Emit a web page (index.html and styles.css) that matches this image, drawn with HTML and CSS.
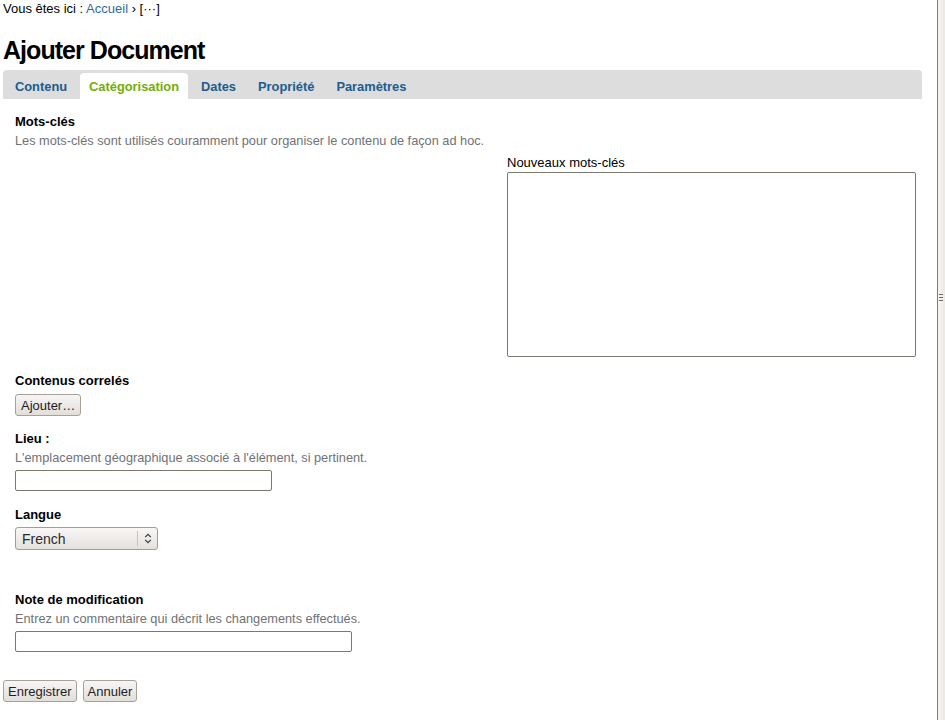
FILE: index.html
```html
<!DOCTYPE html>
<html lang="fr">
<head>
<meta charset="utf-8">
<title>Ajouter Document</title>
<link rel="stylesheet" href="styles.css">
</head>
<body>
<div class="layout">
  <main class="main">
    <nav class="breadcrumbs">Vous êtes ici : <a class="crumb-link" href="#">Accueil</a> › [···]</nav>
    <h1 class="title">Ajouter Document</h1>
    <ul class="tabs">
      <li class="tab">Contenu</li>
      <li class="tab tab-active">Catégorisation</li>
      <li class="tab">Dates</li>
      <li class="tab">Propriété</li>
      <li class="tab">Paramètres</li>
    </ul>
    <div class="panel">
      <div class="field">
        <div class="label">Mots-clés</div>
        <div class="desc">Les mots-clés sont utilisés couramment pour organiser le contenu de façon ad hoc.</div>
        <div class="keywords">
          <div class="kw-existing"></div>
          <div class="kw-new">
            <div class="kw-label">Nouveaux mots-clés</div>
            <textarea class="textarea"></textarea>
          </div>
        </div>
      </div>
      <div class="field field-related">
        <div class="label">Contenus correlés</div>
        <button class="btn btn-ctrl" type="button">Ajouter…</button>
      </div>
      <div class="field">
        <div class="label">Lieu :</div>
        <div class="desc">L'emplacement géographique associé à l'élément, si pertinent.</div>
        <input class="input input-short" type="text">
      </div>
      <div class="field field-lang">
        <div class="label">Langue</div>
        <div class="select">
          <span class="select-text">French</span>
          <span class="select-arrow">
            <svg width="8" height="11" viewBox="0 0 8 11"><path d="M1.2 4.2 L4 1.4 L6.8 4.2 M1.2 6.8 L4 9.6 L6.8 6.8" fill="none" stroke="#3a3a3a" stroke-width="1.2"/></svg>
          </span>
        </div>
      </div>
      <div class="field">
        <div class="label">Note de modification</div>
        <div class="desc">Entrez un commentaire qui décrit les changements effectués.</div>
        <input class="input input-long" type="text">
      </div>
    </div>
    <div class="actions">
      <button class="btn" type="button">Enregistrer</button>
      <button class="btn" type="button">Annuler</button>
    </div>
  </main>
  <div class="splitter"><span class="grip"></span></div>
</div>
</body>
</html>
```

FILE: styles.css
```css
html, body {
  margin: 0;
  padding: 0;
  background: #fff;
}
body {
  font-family: "Liberation Sans", Arial, sans-serif;
  font-size: 13px;
  color: #000;
}
.layout {
  display: flex;
  min-height: 720px;
}
.main {
  flex: 1;
  padding: 0 15px 0 3px;
}
.breadcrumbs {
  line-height: 18px;
}
.crumb-link {
  color: #36699b;
  text-decoration: none;
}
.title {
  margin: 17px 0 5px;
  font-size: 25px;
  line-height: 30px;
  letter-spacing: -0.95px;
  font-weight: bold;
}
.tabs {
  list-style: none;
  margin: 0;
  padding: 3px 0 0 3px;
  display: flex;
  gap: 4px;
  height: 29px;
  box-sizing: border-box;
  background: #dddddd;
  border-radius: 4px 4px 0 0;
}
.tab {
  padding: 4px 9px 3px;
  line-height: 19px;
  font-size: 12.85px;
  font-weight: bold;
  color: #205c90;
  border-radius: 4px 4px 0 0;
}
.tab-active {
  background: #fff;
  color: #75ad0a;
}
.panel {
  padding: 13px 6px 0 12px;
}
.field {
  margin-bottom: 14px;
}
.field-related {
  margin-bottom: 13px;
}
.field-lang {
  margin-bottom: 40px;
}
.label {
  font-weight: bold;
  line-height: 19px;
}
.desc {
  line-height: 19px;
  font-size: 12.75px;
  color: #707275;
}
.keywords {
  display: grid;
  grid-template-columns: 492px 409px;
  margin-top: 3px;
}
.kw-label {
  line-height: 19px;
}
.textarea {
  display: block;
  width: 409px;
  height: 185px;
  box-sizing: border-box;
  margin: 0;
  border: 1px solid #7d7770;
  border-radius: 2px;
  resize: none;
  font: inherit;
}
.btn {
  height: 22px;
  box-sizing: border-box;
  margin: 0;
  padding: 0 4px;
  font-family: "Liberation Sans", Arial, sans-serif;
  font-size: 13px;
  color: #1e1e1e;
  border: 1px solid #a7a198;
  border-radius: 3px;
  background: linear-gradient(#f7f6f5, #e2ded9);
}
.btn-ctrl {
  display: block;
  margin-top: 4px;
  padding: 0 5px;
}
.input {
  display: block;
  height: 21px;
  box-sizing: border-box;
  margin: 3px 0 0;
  border: 1px solid #7d7770;
  border-radius: 2px;
  background: #fff;
  font: inherit;
}
.input-short {
  width: 257px;
}
.input-long {
  width: 337px;
}
.select {
  display: flex;
  align-items: center;
  width: 143px;
  height: 23px;
  box-sizing: border-box;
  margin-top: 3px;
  border: 1px solid #a39d95;
  border-radius: 3px;
  background: linear-gradient(#f8f7f6, #e4e0dc);
  font-size: 14px;
  color: #2c2c2c;
}
.select-text {
  flex: 1;
  padding-left: 6px;
}
.select-arrow {
  display: flex;
  align-items: center;
  justify-content: center;
  width: 19px;
  height: 15px;
  border-left: 1px solid #c9c4be;
}
.actions {
  display: flex;
  gap: 6px;
  margin-top: 28px;
}
.splitter {
  flex: 0 0 7px;
  border-left: 1px solid #857b71;
  background: linear-gradient(to right, #f7f5f3, #ece8e4);
  padding-top: 294px;
  display: flex;
  justify-content: flex-end;
  align-items: flex-start;
}
.grip {
  display: block;
  width: 4px;
  height: 7px;
  margin-right: 2px;
  background: repeating-linear-gradient(#6f6a65 0, #6f6a65 1px, transparent 1px, transparent 3px);
}
```
